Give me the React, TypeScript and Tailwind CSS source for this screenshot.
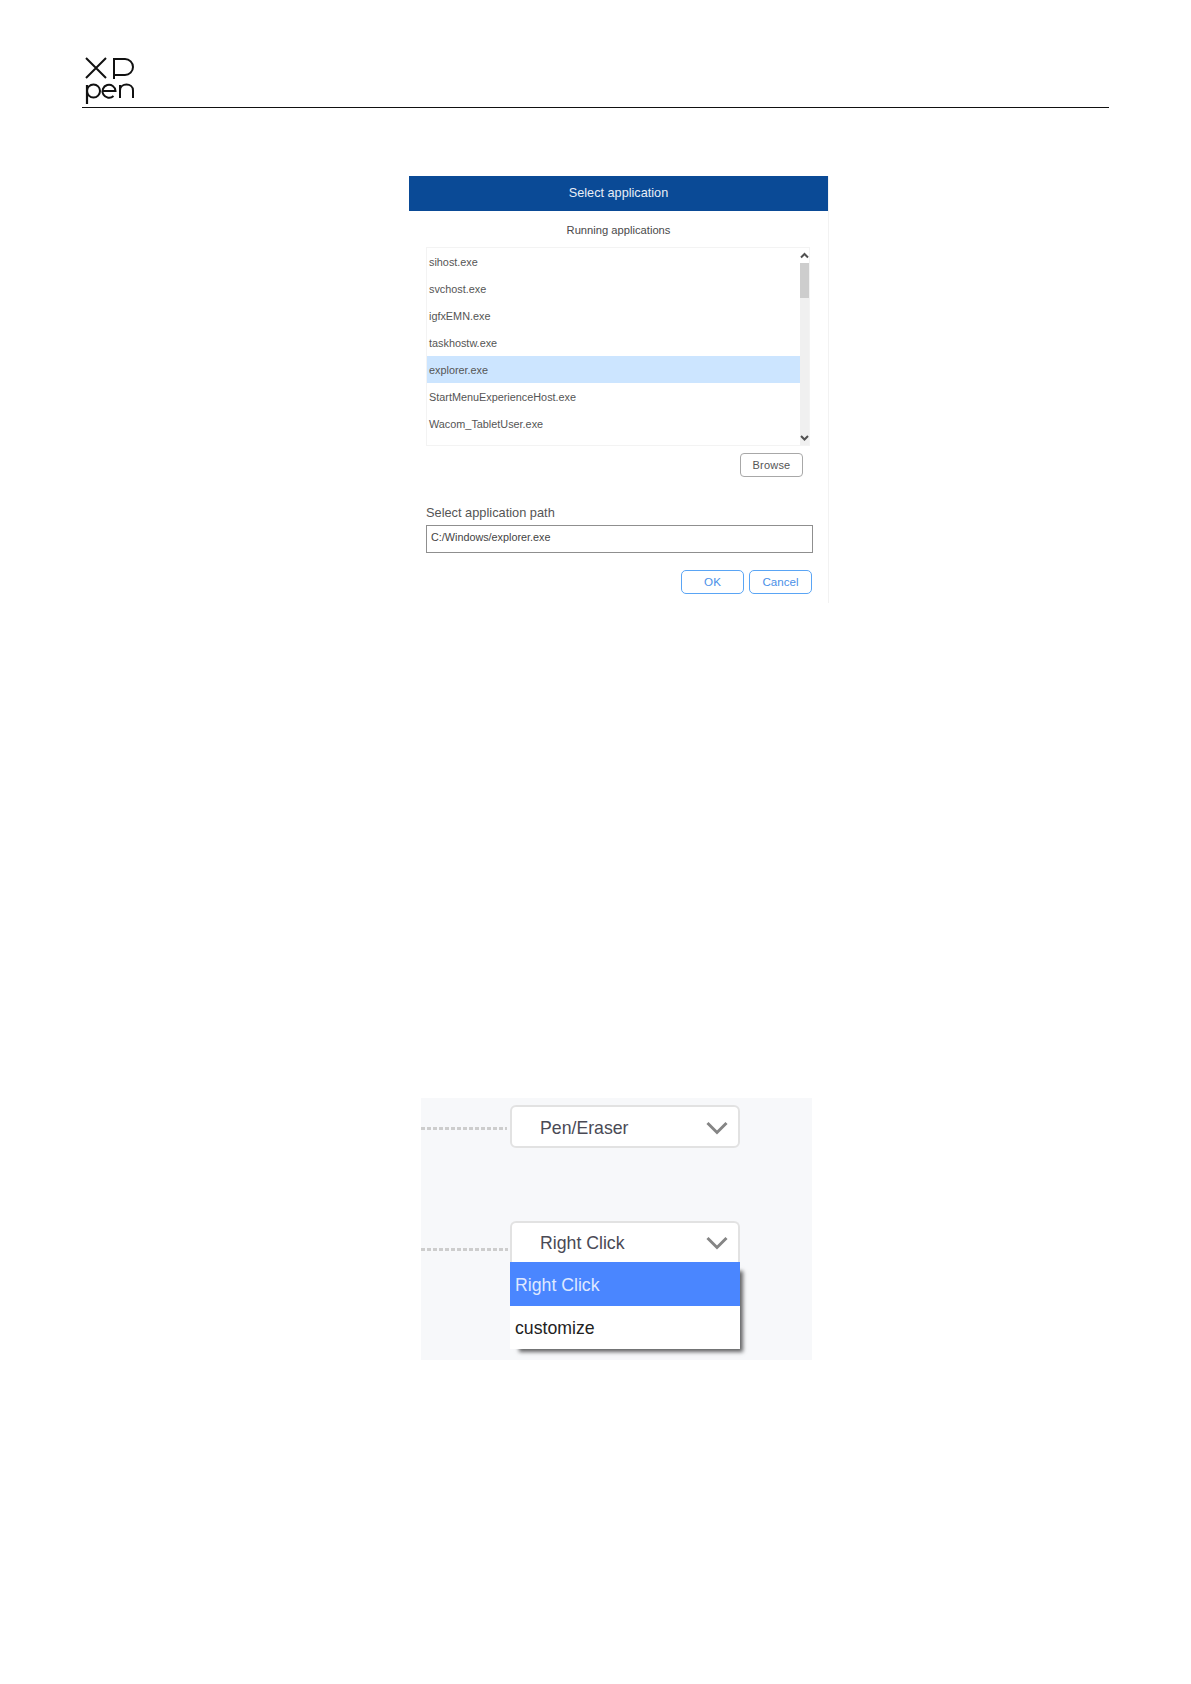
const apps = [
  'sihost.exe',
  'svchost.exe',
  'igfxEMN.exe',
  'taskhostw.exe',
  'explorer.exe',
  'StartMenuExperienceHost.exe',
  'Wacom_TabletUser.exe',
];

function Logo() {
  return (
    <svg width="50" height="48" viewBox="0 0 50 48" fill="none" stroke="#111" className="block">
      <path d="M1 1 L21 21 M21 1 L1 21" strokeWidth="2" />
      <path d="M29 22 V2 H40 A8 8 0 0 1 40 18 H29" strokeWidth="2" />
      <path d="M2 47 V28" strokeWidth="2.2" />
      <circle cx="8.5" cy="34" r="6.5" strokeWidth="2" />
      <path d="M17.5 34 H30.5 A6.5 6.5 0 1 0 28.5 39" strokeWidth="2" />
      <path d="M35 41 V28 M35 33.5 C35 25.5 48 25.5 48 33.5 V41" strokeWidth="2" />
    </svg>
  );
}

function Chevron() {
  return (
    <svg width="22" height="14" viewBox="0 0 22 14" fill="none" stroke="#858585" strokeWidth="3" className="block">
      <path d="M1.5 2 L11 11.5 L20.5 2" />
    </svg>
  );
}

function ScrollArrow({ up }: { up?: boolean }) {
  return (
    <svg width="9" height="9" viewBox="0 0 9 9" fill="none" stroke="#505050" strokeWidth="2" className="block">
      <path d={up ? 'M1 6.5 L4.5 3 L8 6.5' : 'M1 3 L4.5 6.5 L8 3'} />
    </svg>
  );
}

function Dashes({ width }: { width: number }) {
  return (
    <svg width={width} height="3" className="block shrink-0">
      <line x1="0" y1="1.5" x2={width} y2="1.5" stroke="#cdcdcd" strokeWidth="3" strokeDasharray="4 2" />
    </svg>
  );
}

function SelectBox({ label, open }: { label: string; open?: boolean }) {
  return (
    <div
      className={`flex w-[230px] items-center justify-between border-2 border-[#e2e2e2] bg-white pl-[28px] pr-[10px] text-[17.7px] text-[#4a4a55] ${
        open ? 'h-[41px] rounded-t-[6px] border-b-0' : 'h-[43px] rounded-[6px] pt-[2px]'
      }`}
    >
      <span className="mt-[2px]">{label}</span>
      <Chevron />
    </div>
  );
}

export default function App() {
  return (
    <div className="min-h-[1684px] w-[1191px] bg-white pt-[57px] font-['Liberation_Sans',Arial,sans-serif]">
      <div className="ml-[82px] mr-[82px] h-[51px] border-b-[1.5px] border-[#111] pl-[3px]">
        <Logo />
      </div>

      {/* select application dialog */}
      <div className="ml-[409px] mt-[68px] h-[427px] w-[420px] border-r border-[#f2f2f2] bg-white">
        <div className="flex h-[35px] items-center justify-center bg-[#0a4a96] text-[12.7px] text-[#e8eef6]">
          Select application
        </div>
        <div className="mt-[11px] text-center text-[11.2px] leading-[16px] text-[#4a4a4a]">Running applications</div>
        <div className="ml-[17px] mt-[9px] flex h-[199px] w-[384px] border border-[#f3f3f3]">
          <div className="flex-1">
            {apps.map((app) => (
              <div
                key={app}
                className={`flex h-[27px] items-center pl-[2px] pt-[1px] text-[10.85px] text-[#555] ${
                  app === 'explorer.exe' ? 'bg-[#cce5ff]' : ''
                }`}
              >
                {app}
              </div>
            ))}
          </div>
          <div className="flex w-[9px] flex-col bg-[#f0f0f0]">
            <div className="flex h-[15px] items-center justify-center bg-white">
              <ScrollArrow up />
            </div>
            <div className="h-[35px] bg-[#cdcdcd]" />
            <div className="flex-1" />
            <div className="flex h-[15px] items-center justify-center">
              <ScrollArrow />
            </div>
          </div>
        </div>
        <div className="ml-[331px] mt-[7px] flex h-[24px] w-[63px] items-center justify-center rounded-[4px] border border-[#a8a8a8] text-[11px] tracking-[0.2px] text-[#555]">
          Browse
        </div>
        <div className="ml-[17px] mt-[28px] text-[12.8px] leading-[16px] text-[#555]">Select application path</div>
        <div className="ml-[17px] mt-[4px] flex h-[28px] w-[387px] items-start border border-[#8f8f8f] pl-[4px] pt-[4px] text-[10.8px] leading-[14px] text-[#444]">
          C:/Windows/explorer.exe
        </div>
        <div className="ml-[272px] mt-[17px] flex gap-[5px]">
          <div className="flex h-[24px] w-[63px] items-center justify-center rounded-[5px] border-[1.5px] border-[#5aa5f5] text-[11.6px] text-[#4a90e8]">
            OK
          </div>
          <div className="flex h-[24px] w-[63px] items-center justify-center rounded-[5px] border-[1.5px] border-[#5aa5f5] text-[11.6px] text-[#4a90e8]">
            Cancel
          </div>
        </div>
      </div>

      {/* pen button dropdown crop */}
      <div className="ml-[421px] mt-[495px] h-[262px] w-[391px] bg-[#f7f8fa] pt-[7px]">
        <div className="flex items-start">
          <div className="mt-[22px]">
            <Dashes width={86} />
          </div>
          <div className="ml-[3px]">
            <SelectBox label="Pen/Eraser" />
          </div>
        </div>
        <div className="mt-[73px] flex items-start">
          <div className="mt-[27px]">
            <Dashes width={87} />
          </div>
          <div className="ml-[2px]">
            <SelectBox label="Right Click" open />
          </div>
        </div>
        <div className="ml-[89px] w-[230px] bg-white text-[17.7px] shadow-[6px_6px_4px_-3px_rgba(0,0,0,0.6)]">
          <div className="flex h-[44px] items-center bg-[#4a86ff] pl-[5px] pt-[2px] text-[#dfe8ff]">Right Click</div>
          <div className="flex h-[43px] items-center pl-[5px] pt-[2px] text-[#222]">customize</div>
        </div>
      </div>
    </div>
  );
}
